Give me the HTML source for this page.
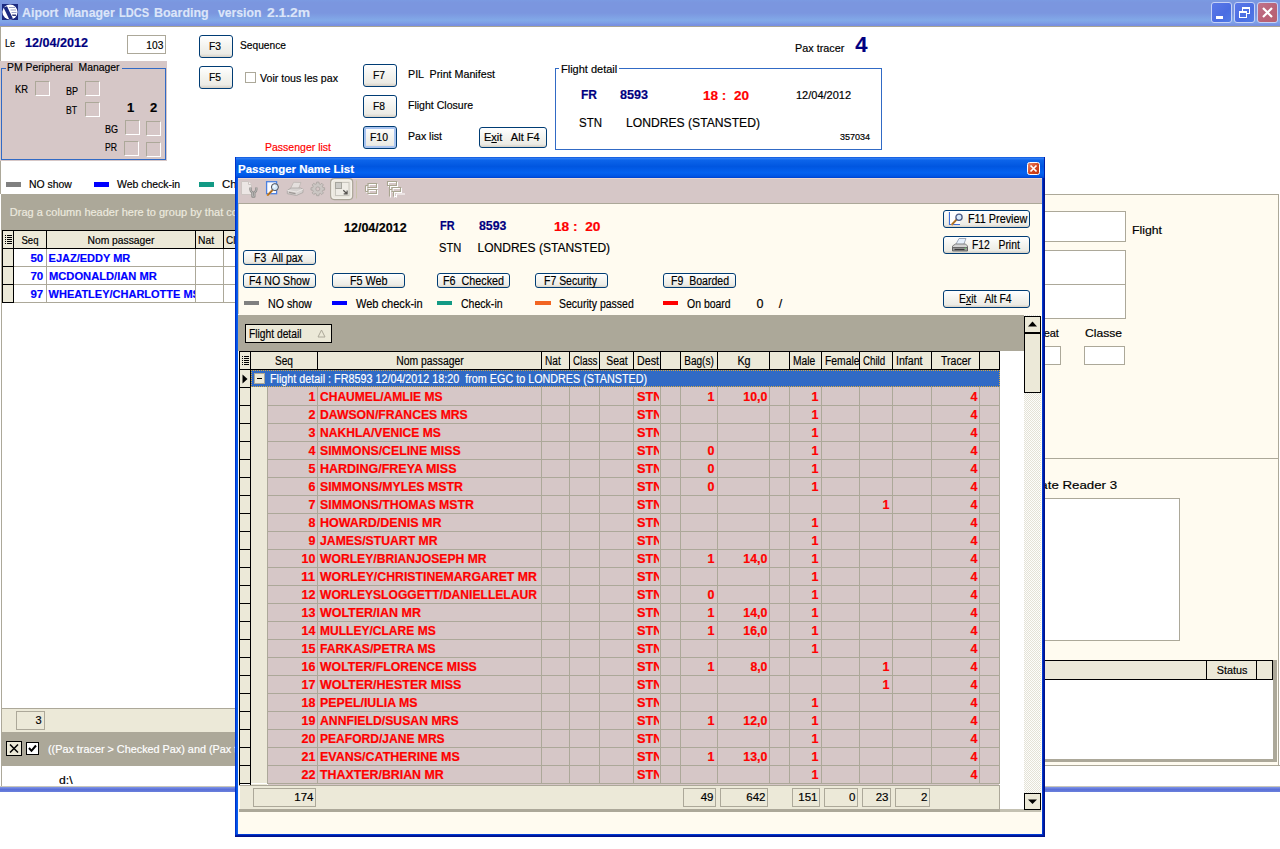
<!DOCTYPE html>
<html><head><meta charset="utf-8"><title>Aiport Manager LDCS Boarding</title>
<style>
html,body{margin:0;padding:0;background:#fff;}
body{width:1280px;height:849px;overflow:hidden;font-family:"Liberation Sans",sans-serif;font-size:11px;color:#000;}
#root{position:relative;width:1280px;height:849px;overflow:hidden;background:#fff;}
#root div,#root span.t,#root svg{position:absolute;box-sizing:border-box;}
.t{white-space:pre;line-height:1;-webkit-text-stroke-width:0.18px;}
.btn{border:1px solid #003c74;border-radius:3px;background:linear-gradient(#fff 0%,#f3f3ee 50%,#ecebe5 85%,#d6d0c5 100%);}
.btn.foc{box-shadow:inset 0 0 0 2px #a9c4f0;}
.inp{border:1px solid #aca899;background:#fff;}
.pk{background:#d6c7c7;}
.chk{border:1px solid #fff;border-top-color:#aca899;border-left-color:#aca899;background:#d6c7c7;}
.hc{background:#ece9d8;border-right:1px solid #000;border-bottom:1px solid #000;}
.fbox{border:1px solid #aca899;background:#ece9d8;}

</style></head>
<body>
<div id="root">
<div style="left:0px;top:0px;width:1280px;height:26px;background:linear-gradient(#7b9ae2 0%,#7b96df 10%,#7b96df 50%,#82a9e8 78%,#7e9fe6 88%,#7890e2 96%,#7890e2 100%);"></div>
<div style="left:0px;top:26px;width:1280px;height:1px;background:#a8a494;"></div>
<svg style="left:2px;top:4px" width="16" height="16" viewBox="0 0 16 16"><rect width="16" height="16" fill="#1b2a80"/><circle cx="8" cy="8" r="7.600" fill="#fff"/><path d="M1.500 3.500L5 2.200L11 14.800L7.200 15.200Z" fill="#1b2a80"/><path d="M7 3.500h6M8.500 6h5.500M9.500 8.500h5" stroke="#9aa3c8" stroke-width="1"/><path d="M10 10.500h4v1.500h-3.500z" fill="#333c7a"/></svg>
<span class="t" style="top:6.17px;font-size:13.5px;left:22.3px;transform:scaleX(0.918);transform-origin:left center;font-weight:bold;color:#dbe5f9;">Aiport</span>
<span class="t" style="top:6.17px;font-size:13.5px;left:64px;transform:scaleX(0.913);transform-origin:left center;font-weight:bold;color:#dbe5f9;">Manager</span>
<span class="t" style="top:6.17px;font-size:13.5px;left:119.4px;transform:scaleX(0.816);transform-origin:left center;font-weight:bold;color:#dbe5f9;">LDCS</span>
<span class="t" style="top:6.17px;font-size:13.5px;left:153.7px;transform:scaleX(0.923);transform-origin:left center;font-weight:bold;color:#dbe5f9;">Boarding</span>
<span class="t" style="top:6.17px;font-size:13.5px;left:217.5px;transform:scaleX(0.904);transform-origin:left center;font-weight:bold;color:#dbe5f9;">version</span>
<span class="t" style="top:6.17px;font-size:13.5px;left:266.9px;transform:scaleX(1.025);transform-origin:left center;font-weight:bold;color:#dbe5f9;">2.1.2m</span>
<div style="left:1211px;top:2px;width:21px;height:21px;border:1px solid #c6d2f6;border-radius:3px;background:linear-gradient(135deg,#5b78e8,#4a6de2 60%,#4f7be6);"><div style="left:4px;top:13px;width:7px;height:3px;background:#fff"></div></div>
<div style="left:1234px;top:2px;width:21px;height:21px;border:1px solid #c6d2f6;border-radius:3px;background:linear-gradient(135deg,#5b78e8,#4a6de2 60%,#4f7be6);"><div style="left:7px;top:4px;width:8px;height:7px;border:1px solid #fff;border-top-width:2px"></div><div style="left:4px;top:8px;width:8px;height:7px;border:1px solid #fff;border-top-width:2px;background:#4d70e3"></div></div>
<div style="left:1257px;top:2px;width:21px;height:21px;border:1px solid #c6d2f6;border-radius:3px;background:linear-gradient(135deg,#c0738a,#b96277 60%,#b8606f);"><svg style="left:3px;top:3px" width="13" height="13" viewBox="0 0 13 13"><path d="M2 2 L11 11 M11 2 L2 11" stroke="#fff" stroke-width="2.2"/></svg></div>
<div style="left:0px;top:27px;width:1px;height:760px;background:#fff;"></div>
<span class="t" style="top:37.69px;font-size:11px;left:5px;transform:scaleX(0.817);transform-origin:left center;">Le</span>
<span class="t" style="top:36.00px;font-size:13px;left:25px;transform:scaleX(0.968);transform-origin:left center;font-weight:bold;color:#000080;">12/04/2012</span>
<div class="inp" style="left:127px;top:35px;width:39px;height:19px;"></div>
<span class="t" style="top:39.69px;font-size:11px;right:1117.00px;transform:scaleX(0.926);transform-origin:right center;">103</span>
<div class="pk" style="left:0px;top:61px;width:167px;height:100px;"></div>
<div style="left:1px;top:68px;width:165px;height:92px;border:1px solid #316ac5;"></div>
<div class="pk" style="left:6px;top:62px;width:116px;height:13px;"></div>
<span class="t" style="top:62.49px;font-size:11px;left:7.4px;transform:scaleX(0.944);transform-origin:left center;">PM Peripheral  Manager</span>
<span class="t" style="top:83.69px;font-size:11px;left:15px;transform:scaleX(0.851);transform-origin:left center;">KR</span>
<div class="chk" style="left:35px;top:81px;width:15px;height:15px;"></div>
<span class="t" style="top:85.69px;font-size:11px;left:66px;transform:scaleX(0.818);transform-origin:left center;">BP</span>
<div class="chk" style="left:85px;top:81px;width:15px;height:15px;"></div>
<span class="t" style="top:104.69px;font-size:11px;left:66px;transform:scaleX(0.783);transform-origin:left center;">BT</span>
<div class="chk" style="left:85px;top:102px;width:15px;height:15px;"></div>
<span class="t" style="top:100.80px;font-size:13px;left:127px;font-weight:bold;">1</span>
<span class="t" style="top:100.80px;font-size:13px;left:150px;font-weight:bold;">2</span>
<span class="t" style="top:123.69px;font-size:11px;left:105px;transform:scaleX(0.818);transform-origin:left center;">BG</span>
<div class="chk" style="left:125px;top:120px;width:15px;height:15px;"></div>
<div class="chk" style="left:146px;top:121px;width:15px;height:15px;"></div>
<span class="t" style="top:141.69px;font-size:11px;left:105px;transform:scaleX(0.785);transform-origin:left center;">PR</span>
<div class="chk" style="left:124px;top:141px;width:15px;height:15px;"></div>
<div class="chk" style="left:146px;top:142px;width:15px;height:15px;"></div>
<div class="btn" style="left:199px;top:35px;width:34px;height:23px;"></div><span class="t" style="top:41.15px;font-size:11px;left:64.80px;width:300px;text-align:center;transform:scaleX(0.935);transform-origin:center center;">F3</span>
<span class="t" style="top:39.69px;font-size:11px;left:240px;transform:scaleX(0.928);transform-origin:left center;">Sequence</span>
<div class="btn" style="left:199px;top:66px;width:34px;height:23px;"></div><span class="t" style="top:72.15px;font-size:11px;left:64.80px;width:300px;text-align:center;transform:scaleX(0.935);transform-origin:center center;">F5</span>
<div style="left:245px;top:72px;width:11px;height:11px;border:1px solid #aca899;background:#fff;"></div>
<span class="t" style="top:72.69px;font-size:11px;left:260px;transform:scaleX(0.966);transform-origin:left center;">Voir tous les pax</span>
<div class="btn" style="left:363px;top:64px;width:34px;height:23px;"></div><span class="t" style="top:70.15px;font-size:11px;left:228.80px;width:300px;text-align:center;transform:scaleX(0.935);transform-origin:center center;">F7</span>
<span class="t" style="top:68.69px;font-size:11px;left:408px;transform:scaleX(0.972);transform-origin:left center;white-space:pre;">PIL  Print Manifest</span>
<div class="btn" style="left:363px;top:95px;width:34px;height:23px;"></div><span class="t" style="top:101.15px;font-size:11px;left:228.80px;width:300px;text-align:center;transform:scaleX(0.935);transform-origin:center center;">F8</span>
<span class="t" style="top:99.69px;font-size:11px;left:408px;transform:scaleX(0.958);transform-origin:left center;">Flight Closure</span>
<div class="btn foc" style="left:363px;top:126px;width:34px;height:23px;"></div><span class="t" style="top:132.15px;font-size:11px;left:228.80px;width:300px;text-align:center;transform:scaleX(0.950);transform-origin:center center;">F10</span>
<span class="t" style="top:130.69px;font-size:11px;left:408px;transform:scaleX(0.959);transform-origin:left center;">Pax list</span>
<div class="btn" style="left:479px;top:127px;width:68px;height:21px;"></div><span class="t" style="top:132.15px;font-size:11px;left:361.80px;width:300px;text-align:center;">E<u>x</u>it   Alt F4</span>
<span class="t" style="top:141.69px;font-size:11px;left:265px;transform:scaleX(0.955);transform-origin:left center;color:#ff0000;">Passenger list</span>
<span class="t" style="top:42.89px;font-size:11px;left:794.6px;transform:scaleX(0.983);transform-origin:left center;">Pax tracer</span>
<span class="t" style="top:34.18px;font-size:22px;left:855.3px;font-weight:bold;color:#000080;">4</span>
<div style="left:555px;top:68px;width:327px;height:82px;border:1px solid #316ac5;"></div>
<div style="left:559px;top:62px;width:60px;height:13px;background:#fff;"></div>
<span class="t" style="top:63.69px;font-size:11px;left:561px;">Flight detail</span>
<span class="t" style="top:88.00px;font-size:13px;left:581px;transform:scaleX(0.923);transform-origin:left center;font-weight:bold;color:#000080;">FR</span>
<span class="t" style="top:88.00px;font-size:13px;left:620px;transform:scaleX(0.968);transform-origin:left center;font-weight:bold;color:#000080;">8593</span>
<span class="t" style="top:89.00px;font-size:13px;left:703px;transform:scaleX(1.043);transform-origin:left center;font-weight:bold;color:#ff0000;white-space:pre;">18 :  20</span>
<span class="t" style="top:89.69px;font-size:11px;left:796px;">12/04/2012</span>
<span class="t" style="top:116.00px;font-size:13px;left:579px;transform:scaleX(0.885);transform-origin:left center;">STN</span>
<span class="t" style="top:116.00px;font-size:13px;left:626px;transform:scaleX(0.934);transform-origin:left center;">LONDRES (STANSTED)</span>
<span class="t" style="top:132.88px;font-size:9px;left:840px;">357034</span>
<div style="left:5.5px;top:182px;width:15px;height:5px;background:#808080;"></div><span class="t" style="top:179.49px;font-size:11px;left:28.5px;transform:scaleX(0.946);transform-origin:left center;">NO show</span>
<div style="left:94px;top:182px;width:15px;height:5px;background:#0000ff;"></div><span class="t" style="top:179.49px;font-size:11px;left:117.2px;transform:scaleX(0.951);transform-origin:left center;">Web check-in</span>
<div style="left:198.5px;top:182px;width:15px;height:5px;background:#139a85;"></div><span class="t" style="top:179.49px;font-size:11px;left:221.6px;transform:scaleX(1.037);transform-origin:left center;">Check-in</span>
<div style="left:1px;top:194px;width:1042px;height:1px;background:#aca899;"></div>
<div style="left:2px;top:194px;width:1040px;height:37px;background:#aca899;"></div>
<span class="t" style="top:207.29px;font-size:11px;left:9.8px;color:#eceadf;">Drag a column header here to group by that column</span>
<div style="left:2px;top:230px;width:300px;height:1px;background:#000;"></div>
<div style="left:2px;top:231px;width:1px;height:72px;background:#000;"></div>
<div class="hc" style="left:3px;top:231px;width:11px;height:18px;"></div>
<svg style="left:5px;top:235px" width="7" height="10" viewBox="0 0 7 10"><path d="M0 0.5h1M2 0.5h5M0 2.5h1M2 2.5h5M0 4.5h1M2 4.5h5M0 6.5h1M2 6.5h5M0 8.5h1M2 8.5h5" stroke="#000" stroke-width="1"/></svg>
<div class="hc" style="left:14px;top:231px;width:33px;height:18px;"></div><span class="t" style="top:234.59px;font-size:11px;left:-120.00px;width:300px;text-align:center;transform:scaleX(0.869);transform-origin:center center;">Seq</span>
<div class="hc" style="left:47px;top:231px;width:149px;height:18px;"></div><span class="t" style="top:234.59px;font-size:11px;left:-29.00px;width:300px;text-align:center;transform:scaleX(0.937);transform-origin:center center;">Nom passager</span>
<div class="hc" style="left:196px;top:231px;width:28px;height:18px;"></div><span class="t" style="top:234.59px;font-size:11px;left:198px;transform:scaleX(0.935);transform-origin:left center;">Nat</span>
<div class="hc" style="left:224px;top:231px;width:30px;height:18px;"></div><span class="t" style="top:234.59px;font-size:11px;left:226px;transform:scaleX(0.909);transform-origin:left center;">Class</span>
<div style="left:3px;top:249px;width:11px;height:18px;background:#ece9d8;border-right:1px solid #000;border-bottom:1px solid #000;"></div>
<div style="left:14px;top:266px;width:240px;height:1px;background:#aca899;"></div>
<span class="t" style="top:252.69px;font-size:11px;right:1237.00px;transform:scaleX(1.046);transform-origin:right center;font-weight:bold;color:#0000ff;">50</span>
<div style="left:48px;top:249px;width:148px;height:17px;overflow:hidden;"><span class="t" style="top:3.69px;font-size:11px;left:0.6px;font-weight:bold;color:#0000ff;">EJAZ/EDDY MR</span></div>
<div style="left:3px;top:267px;width:11px;height:18px;background:#ece9d8;border-right:1px solid #000;border-bottom:1px solid #000;"></div>
<div style="left:14px;top:284px;width:240px;height:1px;background:#aca899;"></div>
<span class="t" style="top:270.69px;font-size:11px;right:1237.00px;transform:scaleX(1.046);transform-origin:right center;font-weight:bold;color:#0000ff;">70</span>
<div style="left:48px;top:267px;width:148px;height:17px;overflow:hidden;"><span class="t" style="top:3.69px;font-size:11px;left:0.6px;transform:scaleX(1.014);transform-origin:left center;font-weight:bold;color:#0000ff;">MCDONALD/IAN MR</span></div>
<div style="left:3px;top:285px;width:11px;height:18px;background:#ece9d8;border-right:1px solid #000;border-bottom:1px solid #000;"></div>
<div style="left:14px;top:302px;width:240px;height:1px;background:#aca899;"></div>
<span class="t" style="top:288.69px;font-size:11px;right:1237.00px;transform:scaleX(1.046);transform-origin:right center;font-weight:bold;color:#0000ff;">97</span>
<div style="left:48px;top:285px;width:148px;height:17px;overflow:hidden;"><span class="t" style="top:3.69px;font-size:11px;left:0.6px;font-weight:bold;color:#0000ff;">WHEATLEY/CHARLOTTE MS</span></div>
<div style="left:46px;top:249px;width:1px;height:54px;background:#aca899;"></div>
<div style="left:195px;top:249px;width:1px;height:54px;background:#aca899;"></div>
<div style="left:223px;top:249px;width:1px;height:54px;background:#aca899;"></div>
<div style="left:2px;top:708px;width:1040px;height:1px;background:#aca899;"></div>
<div style="left:2px;top:709px;width:1040px;height:23px;background:#ece9d8;"></div>
<div class="fbox" style="left:16px;top:711px;width:29px;height:19px;"></div>
<span class="t" style="top:715.49px;font-size:11px;right:1238.50px;">3</span>
<div style="left:2px;top:732px;width:1040px;height:34px;background:#aca899;"></div>
<div style="left:6px;top:741px;width:16px;height:15px;background:#ece9d8;border:1px solid #000;"></div>
<svg style="left:9px;top:744px" width="10" height="9" viewBox="0 0 10 9"><path d="M1 0.500L9 8.500M9 0.500L1 8.500" stroke="#000" stroke-width="1.500"/></svg>
<div style="left:26px;top:742px;width:13px;height:13px;background:#fff;border:1px solid #000;"></div>
<svg style="left:28px;top:744px" width="9" height="9" viewBox="0 0 9 9"><path d="M1 4L3.500 6.800L8 1.500" stroke="#000" stroke-width="2" fill="none"/></svg>
<span class="t" style="top:744.49px;font-size:11px;left:47.8px;transform:scaleX(0.984);transform-origin:left center;color:#fff;">((Pax tracer &gt; Checked Pax) and (Pax tracer = 4))</span>
<span class="t" style="top:774.99px;font-size:11px;left:58.7px;transform:scaleX(1.104);transform-origin:left center;">d:\</span>
<div style="left:1px;top:194px;width:1px;height:592px;background:#aca899;"></div>
<div style="left:0px;top:27px;width:1px;height:34px;background:#aca899;"></div>
<div style="left:0px;top:161px;width:1px;height:33px;background:#aca899;"></div>
<div style="left:1043px;top:194px;width:236px;height:572px;background:#fffbf0;border-top:1px solid #aca899;border-right:1px solid #aca899;"></div>
<div class="inp" style="left:1040px;top:211px;width:86px;height:31px;"></div>
<span class="t" style="top:224.69px;font-size:11px;left:1132px;transform:scaleX(1.115);transform-origin:left center;">Flight</span>
<div class="inp" style="left:1040px;top:250px;width:86px;height:35px;"></div>
<div class="inp" style="left:1040px;top:284px;width:86px;height:35px;"></div>
<span class="t" style="top:327.69px;font-size:11px;left:1036.3px;">Seat</span>
<span class="t" style="top:327.69px;font-size:11px;left:1085px;transform:scaleX(1.100);transform-origin:left center;">Classe</span>
<div class="inp" style="left:1030px;top:346px;width:31px;height:19px;"></div>
<div class="inp" style="left:1084px;top:346px;width:41px;height:19px;"></div>
<div style="left:1043px;top:458px;width:236px;height:1px;background:#aca899;"></div>
<span class="t" style="top:479.69px;font-size:11px;left:1030px;transform:scaleX(1.206);transform-origin:left center;">Gate Reader 3</span>
<div class="inp" style="left:1000px;top:498px;width:180px;height:143px;"></div>
<div style="left:1040px;top:660px;width:237px;height:102px;background:#fff;border-bottom:3px solid #aca899;border-right:4px solid #aca899;"></div>
<div style="left:1040px;top:660px;width:233px;height:1px;background:#000;"></div>
<div class="hc" style="left:1040px;top:661px;width:167px;height:19px;"></div>
<div class="hc" style="left:1207px;top:661px;width:50px;height:19px;"></div><span class="t" style="top:665.09px;font-size:11px;left:1081.50px;width:300px;text-align:center;transform:scaleX(0.984);transform-origin:center center;">Status</span>
<div class="hc" style="left:1257px;top:661px;width:16px;height:19px;"></div>
<div style="left:1043px;top:765px;width:237px;height:1px;background:#aca899;"></div>
<div style="left:1043px;top:766px;width:237px;height:20px;background:#fff;"></div>
<div style="left:0px;top:786px;width:1280px;height:1px;background:#c9c7ba;"></div>
<div style="left:0px;top:787px;width:1280px;height:5px;background:linear-gradient(#7f95e6,#5a70d8 50%,#6a80dc);"></div>
<div style="left:235px;top:157px;width:810px;height:680px;background:#00138c;"></div>
<div style="left:235px;top:157px;width:809px;height:679px;background:linear-gradient(90deg,#0030c8 0,#0030c8 50%,#001aa0 100%);"></div>
<div style="left:235px;top:835px;width:809px;height:1px;background:#001aa0;"></div>
<div style="left:236px;top:157px;width:807px;height:678px;background:linear-gradient(90deg,#0050e4 0,#0050e4 50%,#003ad2 100%);"></div>
<div style="left:236px;top:834px;width:807px;height:1px;background:#003ad2;"></div>
<div style="left:237px;top:157px;width:805px;height:677px;background:#0a5cec;"></div>
<div style="left:235px;top:157px;width:810px;height:21px;background:linear-gradient(#0a52d8 0%,#2f7cf2 6%,#0c64ea 16%,#0056e0 45%,#0562f0 75%,#0055e4 92%,#0040cc 100%);"></div>
<div style="left:235px;top:157px;width:1px;height:21px;background:#0034cc;"></div>
<div style="left:1044px;top:157px;width:1px;height:21px;background:#001ea8;"></div>
<span class="t" style="top:163.89px;font-size:11px;left:238px;transform:scaleX(1.042);transform-origin:left center;font-weight:bold;color:#fff;">Passenger Name List</span>
<div style="left:1027px;top:162px;width:13px;height:13px;border:1px solid #fff;border-radius:2.5px;background:linear-gradient(135deg,#e9876c,#d3461f 55%,#bf3614);"></div>
<svg style="left:1029px;top:164px" width="9" height="9" viewBox="0 0 9 9"><path d="M1.500 1.500L7.500 7.500M7.500 1.500L1.500 7.500" stroke="#fff" stroke-width="1.700"/></svg>
<div style="left:238px;top:178px;width:804px;height:656px;background:#fffbf0;"></div>
<div class="pk" style="left:238px;top:178px;width:804px;height:25px;"></div>
<div style="left:238px;top:203px;width:804px;height:1px;background:#aca899;"></div>
<div style="left:238px;top:178px;width:804px;height:1px;background:#ecd8d2;"></div>
<div style="left:238px;top:204px;width:1px;height:110px;background:#c9c5b8;"></div>
<svg style="left:238px;top:178px" width="180" height="25" viewBox="0 0 180 25">
<g fill="none" stroke-width="1">
<path d="M3.500 3.500h7l3 3v10h-10z" fill="#ece6e4" stroke="#cdc5c2"/><path d="M10.500 3.500v3h3" stroke="#cdc5c2" fill="#f6f2f0"/>
<path d="M12.500 9.500v2.300q0 1.800 2 2.500v4.200h1.800v-4.200q2-0.700 2-2.500v-2.300" stroke="#8f8d8b" stroke-width="2.400" stroke-linejoin="round"/>
<path d="M12.500 9.800v2q0 1.800 2 2.500v4h1.800v-4q2-0.700 2-2.500v-2" stroke="#c9c7c5" stroke-width="0.700"/>
<rect x="28.600" y="3.700" width="10" height="12" fill="#fbfcff" stroke="#4a80e0" stroke-width="1.300"/>
<path d="M34.300 12.300L29.800 16.900" stroke="#c8842e" stroke-width="2.200" stroke-linecap="round"/><path d="M34 12.900L30.300 16.700" stroke="#7a4a12" stroke-width="0.600"/>
<circle cx="36.900" cy="9.100" r="3.500" fill="#d4e8f8" stroke="#4a4c55" stroke-width="1"/><circle cx="36.300" cy="8.400" r="1.300" fill="#f4faff"/>
<path d="M52.400 10.700L55.600 4.300L63 4.500L60.500 10.900Z" fill="#e4dfdd" stroke="#bcb6b3" stroke-width="0.800"/>
<path d="M49.300 12.300L53 10h9.500L65 11.200V14.500L58.500 17.500L49.300 15.700Z" fill="#d6d2d0" stroke="#aaa5a2" stroke-width="0.800"/>
<path d="M49.300 12.300L58.500 14L65 11.200" stroke="#f0ecea" stroke-width="0.800"/>
<path d="M51 14.300L57.500 15.600" stroke="#9c9794" stroke-width="1.300"/>
<path d="M86.60 9.71L86.60 12.09L84.95 12.14L84.32 13.67L85.45 14.87L83.77 16.55L82.57 15.42L81.04 16.05L80.99 17.70L78.61 17.70L78.56 16.05L77.03 15.42L75.83 16.55L74.15 14.87L75.28 13.67L74.65 12.14L73.00 12.09L73.00 9.71L74.65 9.66L75.28 8.13L74.15 6.93L75.83 5.25L77.03 6.38L78.56 5.75L78.61 4.10L80.99 4.10L81.04 5.75L82.57 6.38L83.77 5.25L85.45 6.93L84.32 8.13L84.95 9.66Z" fill="#cbc6c3" stroke="#aba6a3" stroke-width="0.900"/><circle cx="79.800" cy="10.900" r="2" fill="#d6c7c7" stroke="#aba6a3" stroke-width="0.900"/>
<rect x="92.700" y="0.600" width="22" height="21" rx="3.500" fill="#ebe8df" stroke="#aaa598" stroke-width="1.200"/><rect x="94" y="2" width="19.400" height="18.200" rx="2.500" stroke="#f6f4ee" stroke-width="1"/>
<rect x="97.500" y="4.500" width="13.500" height="13" fill="#efede6" stroke="#c9c7bf"/><rect x="97.500" y="4.500" width="6" height="6" fill="#cbcbc6" stroke="#a6a69e"/>
<path d="M105.300 12.300l3.600 3.400m0.200-3.200v3.400h-3.400" stroke="#55534f" stroke-width="1.200"/>
<path d="M118.500 2.500v18" stroke="#c9c3aa"/>
<g transform="translate(1,1)"><path d="M130 5.500h8.500v4h-8.500zM130 11.500h8.500v4h-8.500zM127.500 7.500h2.500M127.500 13.500h2.500M127.500 7.500v6" stroke="#ffffff" stroke-width="1.100"/><path d="M149.500 3.500h9v4h-9zM154 9.500h8.500v4h-8.500zM151.500 7.500v11M151.500 11.500h2.500M155.500 13.500v5M157.500 15h8.500M157.500 15v3.500M155.500 17.500h2" stroke="#ffffff" stroke-width="1.100"/></g>
<path d="M130 5.500h8.500v4h-8.500zM130 11.500h8.500v4h-8.500zM127.500 7.500h2.500M127.500 13.500h2.500M127.500 7.500v6" stroke="#a9a591" stroke-width="1.100"/><path d="M149.500 3.500h9v4h-9zM154 9.500h8.500v4h-8.500zM151.500 7.500v11M151.500 11.500h2.500M155.500 13.500v5" stroke="#a9a591" stroke-width="1.100"/>
</g></svg>
<span class="t" style="top:220.50px;font-size:13px;left:343.5px;transform:scaleX(0.962);transform-origin:left center;font-weight:bold;color:#000;">12/04/2012</span>
<span class="t" style="top:219.54px;font-size:12px;left:439.7px;transform:scaleX(0.906);transform-origin:left center;font-weight:bold;color:#000080;">FR</span>
<span class="t" style="top:219.54px;font-size:12px;left:478.8px;transform:scaleX(1.026);transform-origin:left center;font-weight:bold;color:#000080;">8593</span>
<span class="t" style="top:221.04px;font-size:12px;left:554px;transform:scaleX(1.140);transform-origin:left center;font-weight:bold;color:#ff0000;">18 :  20</span>
<span class="t" style="top:241.84px;font-size:12px;left:439px;transform:scaleX(0.925);transform-origin:left center;">STN</span>
<span class="t" style="top:241.84px;font-size:12px;left:477.6px;">LONDRES (STANSTED)</span>
<div class="btn" style="left:243px;top:250px;width:73px;height:15px;border-radius:3px;"></div><span class="t" style="top:252.22px;font-size:12.5px;left:254.4px;transform:scaleX(0.836);transform-origin:left center;">F3  All pax</span>
<div class="btn" style="left:243px;top:273px;width:73px;height:15px;border-radius:3px;"></div><span class="t" style="top:275.22px;font-size:12.5px;left:248.5px;transform:scaleX(0.847);transform-origin:left center;">F4 NO Show</span>
<div class="btn" style="left:332px;top:273px;width:73px;height:15px;border-radius:3px;"></div><span class="t" style="top:275.22px;font-size:12.5px;left:349.6px;transform:scaleX(0.864);transform-origin:left center;">F5 Web</span>
<div class="btn" style="left:437px;top:273px;width:73px;height:15px;border-radius:3px;"></div><span class="t" style="top:275.22px;font-size:12.5px;left:442.5px;transform:scaleX(0.861);transform-origin:left center;">F6  Checked</span>
<div class="btn" style="left:535px;top:273px;width:73px;height:15px;border-radius:3px;"></div><span class="t" style="top:275.22px;font-size:12.5px;left:544.3px;transform:scaleX(0.838);transform-origin:left center;">F7 Security</span>
<div class="btn" style="left:663px;top:273px;width:73px;height:15px;border-radius:3px;"></div><span class="t" style="top:275.22px;font-size:12.5px;left:670.5px;transform:scaleX(0.843);transform-origin:left center;">F9  Boarded</span>
<div class="btn" style="left:943px;top:210px;width:87px;height:18px;border-radius:3px;"></div><span class="t" style="top:212.62px;font-size:12.5px;left:967.5px;transform:scaleX(0.865);transform-origin:left center;">F11 Preview</span>
<div class="btn" style="left:943px;top:236px;width:87px;height:18px;border-radius:3px;"></div><span class="t" style="top:238.82px;font-size:12.5px;left:972.4px;transform:scaleX(0.829);transform-origin:left center;">F12   Print</span>
<div class="btn" style="left:943px;top:290px;width:87px;height:18px;border-radius:3px;"></div><span class="t" style="top:292.52px;font-size:12.5px;left:959.4px;transform:scaleX(0.832);transform-origin:left center;">E<u>x</u>it   Alt F4</span>
<svg style="left:947px;top:211px" width="18" height="16" viewBox="0 0 18 16"><path d="M2.500 1v12.500h10.500" fill="none" stroke="#3f6fd8" stroke-width="1.200"/><rect x="3" y="1" width="10" height="12" fill="#fdfdff"/><path d="M10 8L4.500 14" stroke="#c98632" stroke-width="2"/><path d="M9.700 8.600L5.500 13" stroke="#6a4210" stroke-width="0.600"/><circle cx="12" cy="6.200" r="3.100" fill="#d9e9fb" stroke="#4a5a86" stroke-width="1.300"/></svg>
<svg style="left:951px;top:237px" width="18" height="16" viewBox="0 0 18 16"><path d="M4.500 8l3.500-6.500h7l-2.500 6.500z" fill="#e6f0fc" stroke="#8d97a8" stroke-width="0.800"/><path d="M1.500 9l3-2h10l2 2v4h-15z" fill="#d4d4d4" stroke="#777" stroke-width="0.900"/><path d="M1.500 10.500h15v3.500h-15z" fill="#9a9a9a" stroke="#555" stroke-width="0.800"/><path d="M3.500 12.500h10" stroke="#3a3a3a" stroke-width="1.200"/><circle cx="14.300" cy="11.300" r="0.700" fill="#6c6"/></svg>
<div style="left:244px;top:301px;width:15px;height:4px;background:#808080;"></div><span class="t" style="top:297.52px;font-size:12.5px;left:267.5px;transform:scaleX(0.852);transform-origin:left center;">NO show</span>
<div style="left:332px;top:301px;width:15px;height:4px;background:#0000ff;"></div><span class="t" style="top:297.52px;font-size:12.5px;left:355.5px;transform:scaleX(0.883);transform-origin:left center;">Web check-in</span>
<div style="left:437px;top:301px;width:15px;height:4px;background:#139a85;"></div><span class="t" style="top:297.52px;font-size:12.5px;left:460.7px;transform:scaleX(0.843);transform-origin:left center;">Check-in</span>
<div style="left:534.5px;top:301px;width:16px;height:4px;background:#f26522;"></div><span class="t" style="top:297.52px;font-size:12.5px;left:558.5px;transform:scaleX(0.841);transform-origin:left center;">Security passed</span>
<div style="left:662.5px;top:301px;width:15px;height:4px;background:#ff0000;"></div><span class="t" style="top:297.52px;font-size:12.5px;left:686.5px;transform:scaleX(0.838);transform-origin:left center;">On board</span>
<span class="t" style="top:297.52px;font-size:12.5px;left:756.5px;">0</span>
<span class="t" style="top:297.52px;font-size:12.5px;left:778.8px;">/</span>
<div style="left:238px;top:315px;width:786px;height:36px;background:#aca899;"></div>
<div style="left:245px;top:324px;width:87px;height:19px;background:#ece9d8;border:1px solid #000;"></div>
<span class="t" style="top:327.92px;font-size:12.5px;left:248.5px;transform:scaleX(0.821);transform-origin:left center;">Flight detail</span>
<svg style="left:317px;top:329px" width="9" height="9" viewBox="0 0 9 9"><path d="M4.500 1L8 8H1z" fill="none" stroke="#aca899"/></svg>
<div style="left:239px;top:351px;width:785px;height:458px;background:#fff;"></div>
<div style="left:239px;top:351px;width:761px;height:1px;background:#000;"></div>
<div style="left:239px;top:352px;width:1px;height:434px;background:#000;"></div>
<div class="hc" style="left:240px;top:352px;width:11px;height:18px;overflow:hidden;"></div>
<div class="hc" style="left:251px;top:352px;width:67px;height:18px;overflow:hidden;"></div>
<span class="t" style="top:355.42px;font-size:12.5px;left:134.00px;width:300px;text-align:center;transform:scaleX(0.809);transform-origin:center center;">Seq</span>
<div class="hc" style="left:318px;top:352px;width:224px;height:18px;overflow:hidden;"></div>
<span class="t" style="top:355.42px;font-size:12.5px;left:279.50px;width:300px;text-align:center;transform:scaleX(0.830);transform-origin:center center;">Nom passager</span>
<div class="hc" style="left:542px;top:352px;width:28px;height:18px;overflow:hidden;"></div>
<div style="left:542px;top:352px;width:27px;height:17px;overflow:hidden;"><span class="t" style="top:3.42px;font-size:12.5px;left:3px;transform:scaleX(0.807);transform-origin:left center;">Nat</span></div>
<div class="hc" style="left:570px;top:352px;width:30px;height:18px;overflow:hidden;"></div>
<div style="left:570px;top:352px;width:29px;height:17px;overflow:hidden;"><span class="t" style="top:3.42px;font-size:12.5px;left:3px;transform:scaleX(0.781);transform-origin:left center;">Class</span></div>
<div class="hc" style="left:600px;top:352px;width:34px;height:18px;overflow:hidden;"></div>
<span class="t" style="top:355.42px;font-size:12.5px;left:466.50px;width:300px;text-align:center;transform:scaleX(0.836);transform-origin:center center;">Seat</span>
<div class="hc" style="left:634px;top:352px;width:27px;height:18px;overflow:hidden;"></div>
<div style="left:634px;top:352px;width:26px;height:17px;overflow:hidden;"><span class="t" style="top:3.42px;font-size:12.5px;left:3px;transform:scaleX(0.856);transform-origin:left center;">Dest</span></div>
<div class="hc" style="left:661px;top:352px;width:20px;height:18px;overflow:hidden;"></div>
<div class="hc" style="left:681px;top:352px;width:37px;height:18px;overflow:hidden;"></div>
<span class="t" style="top:355.42px;font-size:12.5px;left:549.00px;width:300px;text-align:center;transform:scaleX(0.804);transform-origin:center center;">Bag(s)</span>
<div class="hc" style="left:718px;top:352px;width:52px;height:18px;overflow:hidden;"></div>
<span class="t" style="top:355.42px;font-size:12.5px;left:593.50px;width:300px;text-align:center;transform:scaleX(0.863);transform-origin:center center;">Kg</span>
<div class="hc" style="left:770px;top:352px;width:20px;height:18px;overflow:hidden;"></div>
<div class="hc" style="left:790px;top:352px;width:32px;height:18px;overflow:hidden;"></div>
<div style="left:790px;top:352px;width:31px;height:17px;overflow:hidden;"><span class="t" style="top:3.42px;font-size:12.5px;left:3px;transform:scaleX(0.819);transform-origin:left center;">Male</span></div>
<div class="hc" style="left:822px;top:352px;width:38px;height:18px;overflow:hidden;"></div>
<div style="left:822px;top:352px;width:37px;height:17px;overflow:hidden;"><span class="t" style="top:3.42px;font-size:12.5px;left:3px;transform:scaleX(0.828);transform-origin:left center;">Female</span></div>
<div class="hc" style="left:860px;top:352px;width:33px;height:18px;overflow:hidden;"></div>
<div style="left:860px;top:352px;width:32px;height:17px;overflow:hidden;"><span class="t" style="top:3.42px;font-size:12.5px;left:3px;transform:scaleX(0.779);transform-origin:left center;">Child</span></div>
<div class="hc" style="left:893px;top:352px;width:39px;height:18px;overflow:hidden;"></div>
<div style="left:893px;top:352px;width:38px;height:17px;overflow:hidden;"><span class="t" style="top:3.42px;font-size:12.5px;left:3px;transform:scaleX(0.847);transform-origin:left center;">Infant</span></div>
<div class="hc" style="left:932px;top:352px;width:48px;height:18px;overflow:hidden;"></div>
<span class="t" style="top:355.42px;font-size:12.5px;left:805.50px;width:300px;text-align:center;transform:scaleX(0.841);transform-origin:center center;">Tracer</span>
<div class="hc" style="left:980px;top:352px;width:20px;height:18px;overflow:hidden;"></div>
<svg style="left:242px;top:356px" width="7" height="10" viewBox="0 0 7 10"><path d="M0 0.5h1M2 0.5h5M0 2.500h1M2 2.500h5M0 4.500h1M2 4.500h5M0 6.500h1M2 6.500h5M0 8.500h1M2 8.500h5" stroke="#000" stroke-width="1"/></svg>
<div style="left:240px;top:370px;width:11px;height:17px;background:#ece9d8;"></div>
<div style="left:240px;top:387px;width:11px;height:1px;background:#000;"></div>
<div style="left:250px;top:370px;width:1px;height:416px;background:#000;"></div>
<svg style="left:242px;top:374px" width="6" height="10" viewBox="0 0 6 10"><path d="M0.500 0.500L5.500 5L0.500 9.500z" fill="#000"/></svg>
<div style="left:251px;top:370px;width:749px;height:17px;background:#316ac5;border:1px dotted #d8a840;"></div>
<div style="left:254px;top:373px;width:11px;height:11px;background:#ece9d8;border:1px solid #aca899;"></div>
<div style="left:257px;top:378px;width:5px;height:1px;background:#000;"></div>
<span class="t" style="top:373.12px;font-size:12.5px;left:270px;transform:scaleX(0.862);transform-origin:left center;color:#fff;">Flight detail : FR8593 12/04/2012 18:20  from EGC to LONDRES (STANSTED)</span>
<div style="left:240px;top:388px;width:10px;height:17px;background:#ece9d8;"></div>
<div style="left:240px;top:405px;width:11px;height:1px;background:#000;"></div>
<div style="left:251px;top:387px;width:16px;height:18px;background:#ece9d8;"></div>
<div class="pk" style="left:268px;top:388px;width:731px;height:17px;"></div>
<div style="left:267px;top:405px;width:733px;height:1px;background:#aca899;"></div>
<span class="t" style="top:390.92px;font-size:12.5px;right:964.60px;font-weight:bold;color:#ff0000;-webkit-text-stroke:0.22px #ff0000;">1</span>
<span class="t" style="top:390.92px;font-size:12.5px;left:319.9px;transform:scaleX(0.964);transform-origin:left center;font-weight:bold;color:#ff0000;-webkit-text-stroke:0.22px #ff0000;">CHAUMEL/AMLIE MS</span>
<div style="left:634px;top:388px;width:24.5px;height:17px;overflow:hidden;"><span class="t" style="top:2.92px;font-size:12.5px;left:2.5px;transform:scaleX(1.020);transform-origin:left center;font-weight:bold;color:#ff0000;-webkit-text-stroke:0.22px #ff0000;">STN</span></div>
<span class="t" style="top:390.92px;font-size:12.5px;right:565.50px;font-weight:bold;color:#ff0000;-webkit-text-stroke:0.22px #ff0000;">1</span>
<span class="t" style="top:390.92px;font-size:12.5px;right:512.50px;transform:scaleX(0.986);transform-origin:right center;font-weight:bold;color:#ff0000;-webkit-text-stroke:0.22px #ff0000;">10,0</span>
<span class="t" style="top:390.92px;font-size:12.5px;right:461.50px;font-weight:bold;color:#ff0000;-webkit-text-stroke:0.22px #ff0000;">1</span>
<span class="t" style="top:390.92px;font-size:12.5px;right:302.50px;font-weight:bold;color:#ff0000;-webkit-text-stroke:0.22px #ff0000;">4</span>
<div style="left:240px;top:406px;width:10px;height:17px;background:#ece9d8;"></div>
<div style="left:240px;top:423px;width:11px;height:1px;background:#000;"></div>
<div style="left:251px;top:405px;width:16px;height:18px;background:#ece9d8;"></div>
<div class="pk" style="left:268px;top:406px;width:731px;height:17px;"></div>
<div style="left:267px;top:423px;width:733px;height:1px;background:#aca899;"></div>
<span class="t" style="top:408.92px;font-size:12.5px;right:964.60px;font-weight:bold;color:#ff0000;-webkit-text-stroke:0.22px #ff0000;">2</span>
<span class="t" style="top:408.92px;font-size:12.5px;left:319.9px;transform:scaleX(0.976);transform-origin:left center;font-weight:bold;color:#ff0000;-webkit-text-stroke:0.22px #ff0000;">DAWSON/FRANCES MRS</span>
<div style="left:634px;top:406px;width:24.5px;height:17px;overflow:hidden;"><span class="t" style="top:2.92px;font-size:12.5px;left:2.5px;transform:scaleX(1.020);transform-origin:left center;font-weight:bold;color:#ff0000;-webkit-text-stroke:0.22px #ff0000;">STN</span></div>
<span class="t" style="top:408.92px;font-size:12.5px;right:461.50px;font-weight:bold;color:#ff0000;-webkit-text-stroke:0.22px #ff0000;">1</span>
<span class="t" style="top:408.92px;font-size:12.5px;right:302.50px;font-weight:bold;color:#ff0000;-webkit-text-stroke:0.22px #ff0000;">4</span>
<div style="left:240px;top:424px;width:10px;height:17px;background:#ece9d8;"></div>
<div style="left:240px;top:441px;width:11px;height:1px;background:#000;"></div>
<div style="left:251px;top:423px;width:16px;height:18px;background:#ece9d8;"></div>
<div class="pk" style="left:268px;top:424px;width:731px;height:17px;"></div>
<div style="left:267px;top:441px;width:733px;height:1px;background:#aca899;"></div>
<span class="t" style="top:426.92px;font-size:12.5px;right:964.60px;font-weight:bold;color:#ff0000;-webkit-text-stroke:0.22px #ff0000;">3</span>
<span class="t" style="top:426.92px;font-size:12.5px;left:319.9px;transform:scaleX(0.966);transform-origin:left center;font-weight:bold;color:#ff0000;-webkit-text-stroke:0.22px #ff0000;">NAKHLA/VENICE MS</span>
<div style="left:634px;top:424px;width:24.5px;height:17px;overflow:hidden;"><span class="t" style="top:2.92px;font-size:12.5px;left:2.5px;transform:scaleX(1.020);transform-origin:left center;font-weight:bold;color:#ff0000;-webkit-text-stroke:0.22px #ff0000;">STN</span></div>
<span class="t" style="top:426.92px;font-size:12.5px;right:461.50px;font-weight:bold;color:#ff0000;-webkit-text-stroke:0.22px #ff0000;">1</span>
<span class="t" style="top:426.92px;font-size:12.5px;right:302.50px;font-weight:bold;color:#ff0000;-webkit-text-stroke:0.22px #ff0000;">4</span>
<div style="left:240px;top:442px;width:10px;height:17px;background:#ece9d8;"></div>
<div style="left:240px;top:459px;width:11px;height:1px;background:#000;"></div>
<div style="left:251px;top:441px;width:16px;height:18px;background:#ece9d8;"></div>
<div class="pk" style="left:268px;top:442px;width:731px;height:17px;"></div>
<div style="left:267px;top:459px;width:733px;height:1px;background:#aca899;"></div>
<span class="t" style="top:444.92px;font-size:12.5px;right:964.60px;font-weight:bold;color:#ff0000;-webkit-text-stroke:0.22px #ff0000;">4</span>
<span class="t" style="top:444.92px;font-size:12.5px;left:319.9px;transform:scaleX(0.983);transform-origin:left center;font-weight:bold;color:#ff0000;-webkit-text-stroke:0.22px #ff0000;">SIMMONS/CELINE MISS</span>
<div style="left:634px;top:442px;width:24.5px;height:17px;overflow:hidden;"><span class="t" style="top:2.92px;font-size:12.5px;left:2.5px;transform:scaleX(1.020);transform-origin:left center;font-weight:bold;color:#ff0000;-webkit-text-stroke:0.22px #ff0000;">STN</span></div>
<span class="t" style="top:444.92px;font-size:12.5px;right:565.50px;font-weight:bold;color:#ff0000;-webkit-text-stroke:0.22px #ff0000;">0</span>
<span class="t" style="top:444.92px;font-size:12.5px;right:461.50px;font-weight:bold;color:#ff0000;-webkit-text-stroke:0.22px #ff0000;">1</span>
<span class="t" style="top:444.92px;font-size:12.5px;right:302.50px;font-weight:bold;color:#ff0000;-webkit-text-stroke:0.22px #ff0000;">4</span>
<div style="left:240px;top:460px;width:10px;height:17px;background:#ece9d8;"></div>
<div style="left:240px;top:477px;width:11px;height:1px;background:#000;"></div>
<div style="left:251px;top:459px;width:16px;height:18px;background:#ece9d8;"></div>
<div class="pk" style="left:268px;top:460px;width:731px;height:17px;"></div>
<div style="left:267px;top:477px;width:733px;height:1px;background:#aca899;"></div>
<span class="t" style="top:462.92px;font-size:12.5px;right:964.60px;font-weight:bold;color:#ff0000;-webkit-text-stroke:0.22px #ff0000;">5</span>
<span class="t" style="top:462.92px;font-size:12.5px;left:319.9px;font-weight:bold;color:#ff0000;-webkit-text-stroke:0.22px #ff0000;">HARDING/FREYA MISS</span>
<div style="left:634px;top:460px;width:24.5px;height:17px;overflow:hidden;"><span class="t" style="top:2.92px;font-size:12.5px;left:2.5px;transform:scaleX(1.020);transform-origin:left center;font-weight:bold;color:#ff0000;-webkit-text-stroke:0.22px #ff0000;">STN</span></div>
<span class="t" style="top:462.92px;font-size:12.5px;right:565.50px;font-weight:bold;color:#ff0000;-webkit-text-stroke:0.22px #ff0000;">0</span>
<span class="t" style="top:462.92px;font-size:12.5px;right:461.50px;font-weight:bold;color:#ff0000;-webkit-text-stroke:0.22px #ff0000;">1</span>
<span class="t" style="top:462.92px;font-size:12.5px;right:302.50px;font-weight:bold;color:#ff0000;-webkit-text-stroke:0.22px #ff0000;">4</span>
<div style="left:240px;top:478px;width:10px;height:17px;background:#ece9d8;"></div>
<div style="left:240px;top:495px;width:11px;height:1px;background:#000;"></div>
<div style="left:251px;top:477px;width:16px;height:18px;background:#ece9d8;"></div>
<div class="pk" style="left:268px;top:478px;width:731px;height:17px;"></div>
<div style="left:267px;top:495px;width:733px;height:1px;background:#aca899;"></div>
<span class="t" style="top:480.92px;font-size:12.5px;right:964.60px;font-weight:bold;color:#ff0000;-webkit-text-stroke:0.22px #ff0000;">6</span>
<span class="t" style="top:480.92px;font-size:12.5px;left:319.9px;transform:scaleX(0.984);transform-origin:left center;font-weight:bold;color:#ff0000;-webkit-text-stroke:0.22px #ff0000;">SIMMONS/MYLES MSTR</span>
<div style="left:634px;top:478px;width:24.5px;height:17px;overflow:hidden;"><span class="t" style="top:2.92px;font-size:12.5px;left:2.5px;transform:scaleX(1.020);transform-origin:left center;font-weight:bold;color:#ff0000;-webkit-text-stroke:0.22px #ff0000;">STN</span></div>
<span class="t" style="top:480.92px;font-size:12.5px;right:565.50px;font-weight:bold;color:#ff0000;-webkit-text-stroke:0.22px #ff0000;">0</span>
<span class="t" style="top:480.92px;font-size:12.5px;right:461.50px;font-weight:bold;color:#ff0000;-webkit-text-stroke:0.22px #ff0000;">1</span>
<span class="t" style="top:480.92px;font-size:12.5px;right:302.50px;font-weight:bold;color:#ff0000;-webkit-text-stroke:0.22px #ff0000;">4</span>
<div style="left:240px;top:496px;width:10px;height:17px;background:#ece9d8;"></div>
<div style="left:240px;top:513px;width:11px;height:1px;background:#000;"></div>
<div style="left:251px;top:495px;width:16px;height:18px;background:#ece9d8;"></div>
<div class="pk" style="left:268px;top:496px;width:731px;height:17px;"></div>
<div style="left:267px;top:513px;width:733px;height:1px;background:#aca899;"></div>
<span class="t" style="top:498.92px;font-size:12.5px;right:964.60px;font-weight:bold;color:#ff0000;-webkit-text-stroke:0.22px #ff0000;">7</span>
<span class="t" style="top:498.92px;font-size:12.5px;left:319.9px;transform:scaleX(0.985);transform-origin:left center;font-weight:bold;color:#ff0000;-webkit-text-stroke:0.22px #ff0000;">SIMMONS/THOMAS MSTR</span>
<div style="left:634px;top:496px;width:24.5px;height:17px;overflow:hidden;"><span class="t" style="top:2.92px;font-size:12.5px;left:2.5px;transform:scaleX(1.020);transform-origin:left center;font-weight:bold;color:#ff0000;-webkit-text-stroke:0.22px #ff0000;">STN</span></div>
<span class="t" style="top:498.92px;font-size:12.5px;right:390.50px;font-weight:bold;color:#ff0000;-webkit-text-stroke:0.22px #ff0000;">1</span>
<span class="t" style="top:498.92px;font-size:12.5px;right:302.50px;font-weight:bold;color:#ff0000;-webkit-text-stroke:0.22px #ff0000;">4</span>
<div style="left:240px;top:514px;width:10px;height:17px;background:#ece9d8;"></div>
<div style="left:240px;top:531px;width:11px;height:1px;background:#000;"></div>
<div style="left:251px;top:513px;width:16px;height:18px;background:#ece9d8;"></div>
<div class="pk" style="left:268px;top:514px;width:731px;height:17px;"></div>
<div style="left:267px;top:531px;width:733px;height:1px;background:#aca899;"></div>
<span class="t" style="top:516.92px;font-size:12.5px;right:964.60px;font-weight:bold;color:#ff0000;-webkit-text-stroke:0.22px #ff0000;">8</span>
<span class="t" style="top:516.92px;font-size:12.5px;left:319.9px;font-weight:bold;color:#ff0000;-webkit-text-stroke:0.22px #ff0000;">HOWARD/DENIS MR</span>
<div style="left:634px;top:514px;width:24.5px;height:17px;overflow:hidden;"><span class="t" style="top:2.92px;font-size:12.5px;left:2.5px;transform:scaleX(1.020);transform-origin:left center;font-weight:bold;color:#ff0000;-webkit-text-stroke:0.22px #ff0000;">STN</span></div>
<span class="t" style="top:516.92px;font-size:12.5px;right:461.50px;font-weight:bold;color:#ff0000;-webkit-text-stroke:0.22px #ff0000;">1</span>
<span class="t" style="top:516.92px;font-size:12.5px;right:302.50px;font-weight:bold;color:#ff0000;-webkit-text-stroke:0.22px #ff0000;">4</span>
<div style="left:240px;top:532px;width:10px;height:17px;background:#ece9d8;"></div>
<div style="left:240px;top:549px;width:11px;height:1px;background:#000;"></div>
<div style="left:251px;top:531px;width:16px;height:18px;background:#ece9d8;"></div>
<div class="pk" style="left:268px;top:532px;width:731px;height:17px;"></div>
<div style="left:267px;top:549px;width:733px;height:1px;background:#aca899;"></div>
<span class="t" style="top:534.92px;font-size:12.5px;right:964.60px;font-weight:bold;color:#ff0000;-webkit-text-stroke:0.22px #ff0000;">9</span>
<span class="t" style="top:534.92px;font-size:12.5px;left:319.9px;transform:scaleX(0.979);transform-origin:left center;font-weight:bold;color:#ff0000;-webkit-text-stroke:0.22px #ff0000;">JAMES/STUART MR</span>
<div style="left:634px;top:532px;width:24.5px;height:17px;overflow:hidden;"><span class="t" style="top:2.92px;font-size:12.5px;left:2.5px;transform:scaleX(1.020);transform-origin:left center;font-weight:bold;color:#ff0000;-webkit-text-stroke:0.22px #ff0000;">STN</span></div>
<span class="t" style="top:534.92px;font-size:12.5px;right:461.50px;font-weight:bold;color:#ff0000;-webkit-text-stroke:0.22px #ff0000;">1</span>
<span class="t" style="top:534.92px;font-size:12.5px;right:302.50px;font-weight:bold;color:#ff0000;-webkit-text-stroke:0.22px #ff0000;">4</span>
<div style="left:240px;top:550px;width:10px;height:17px;background:#ece9d8;"></div>
<div style="left:240px;top:567px;width:11px;height:1px;background:#000;"></div>
<div style="left:251px;top:549px;width:16px;height:18px;background:#ece9d8;"></div>
<div class="pk" style="left:268px;top:550px;width:731px;height:17px;"></div>
<div style="left:267px;top:567px;width:733px;height:1px;background:#aca899;"></div>
<span class="t" style="top:552.92px;font-size:12.5px;right:964.60px;font-weight:bold;color:#ff0000;-webkit-text-stroke:0.22px #ff0000;">10</span>
<span class="t" style="top:552.92px;font-size:12.5px;left:319.9px;transform:scaleX(0.971);transform-origin:left center;font-weight:bold;color:#ff0000;-webkit-text-stroke:0.22px #ff0000;">WORLEY/BRIANJOSEPH MR</span>
<div style="left:634px;top:550px;width:24.5px;height:17px;overflow:hidden;"><span class="t" style="top:2.92px;font-size:12.5px;left:2.5px;transform:scaleX(1.020);transform-origin:left center;font-weight:bold;color:#ff0000;-webkit-text-stroke:0.22px #ff0000;">STN</span></div>
<span class="t" style="top:552.92px;font-size:12.5px;right:565.50px;font-weight:bold;color:#ff0000;-webkit-text-stroke:0.22px #ff0000;">1</span>
<span class="t" style="top:552.92px;font-size:12.5px;right:512.50px;transform:scaleX(0.986);transform-origin:right center;font-weight:bold;color:#ff0000;-webkit-text-stroke:0.22px #ff0000;">14,0</span>
<span class="t" style="top:552.92px;font-size:12.5px;right:461.50px;font-weight:bold;color:#ff0000;-webkit-text-stroke:0.22px #ff0000;">1</span>
<span class="t" style="top:552.92px;font-size:12.5px;right:302.50px;font-weight:bold;color:#ff0000;-webkit-text-stroke:0.22px #ff0000;">4</span>
<div style="left:240px;top:568px;width:10px;height:17px;background:#ece9d8;"></div>
<div style="left:240px;top:585px;width:11px;height:1px;background:#000;"></div>
<div style="left:251px;top:567px;width:16px;height:18px;background:#ece9d8;"></div>
<div class="pk" style="left:268px;top:568px;width:731px;height:17px;"></div>
<div style="left:267px;top:585px;width:733px;height:1px;background:#aca899;"></div>
<span class="t" style="top:570.92px;font-size:12.5px;right:964.60px;transform:scaleX(1.059);transform-origin:right center;font-weight:bold;color:#ff0000;-webkit-text-stroke:0.22px #ff0000;">11</span>
<span class="t" style="top:570.92px;font-size:12.5px;left:319.9px;transform:scaleX(0.982);transform-origin:left center;font-weight:bold;color:#ff0000;-webkit-text-stroke:0.22px #ff0000;">WORLEY/CHRISTINEMARGARET MR</span>
<div style="left:634px;top:568px;width:24.5px;height:17px;overflow:hidden;"><span class="t" style="top:2.92px;font-size:12.5px;left:2.5px;transform:scaleX(1.020);transform-origin:left center;font-weight:bold;color:#ff0000;-webkit-text-stroke:0.22px #ff0000;">STN</span></div>
<span class="t" style="top:570.92px;font-size:12.5px;right:461.50px;font-weight:bold;color:#ff0000;-webkit-text-stroke:0.22px #ff0000;">1</span>
<span class="t" style="top:570.92px;font-size:12.5px;right:302.50px;font-weight:bold;color:#ff0000;-webkit-text-stroke:0.22px #ff0000;">4</span>
<div style="left:240px;top:586px;width:10px;height:17px;background:#ece9d8;"></div>
<div style="left:240px;top:603px;width:11px;height:1px;background:#000;"></div>
<div style="left:251px;top:585px;width:16px;height:18px;background:#ece9d8;"></div>
<div class="pk" style="left:268px;top:586px;width:731px;height:17px;"></div>
<div style="left:267px;top:603px;width:733px;height:1px;background:#aca899;"></div>
<span class="t" style="top:588.92px;font-size:12.5px;right:964.60px;font-weight:bold;color:#ff0000;-webkit-text-stroke:0.22px #ff0000;">12</span>
<span class="t" style="top:588.92px;font-size:12.5px;left:319.9px;transform:scaleX(0.967);transform-origin:left center;font-weight:bold;color:#ff0000;-webkit-text-stroke:0.22px #ff0000;">WORLEYSLOGGETT/DANIELLELAUR</span>
<div style="left:634px;top:586px;width:24.5px;height:17px;overflow:hidden;"><span class="t" style="top:2.92px;font-size:12.5px;left:2.5px;transform:scaleX(1.020);transform-origin:left center;font-weight:bold;color:#ff0000;-webkit-text-stroke:0.22px #ff0000;">STN</span></div>
<span class="t" style="top:588.92px;font-size:12.5px;right:565.50px;font-weight:bold;color:#ff0000;-webkit-text-stroke:0.22px #ff0000;">0</span>
<span class="t" style="top:588.92px;font-size:12.5px;right:461.50px;font-weight:bold;color:#ff0000;-webkit-text-stroke:0.22px #ff0000;">1</span>
<span class="t" style="top:588.92px;font-size:12.5px;right:302.50px;font-weight:bold;color:#ff0000;-webkit-text-stroke:0.22px #ff0000;">4</span>
<div style="left:240px;top:604px;width:10px;height:17px;background:#ece9d8;"></div>
<div style="left:240px;top:621px;width:11px;height:1px;background:#000;"></div>
<div style="left:251px;top:603px;width:16px;height:18px;background:#ece9d8;"></div>
<div class="pk" style="left:268px;top:604px;width:731px;height:17px;"></div>
<div style="left:267px;top:621px;width:733px;height:1px;background:#aca899;"></div>
<span class="t" style="top:606.92px;font-size:12.5px;right:964.60px;font-weight:bold;color:#ff0000;-webkit-text-stroke:0.22px #ff0000;">13</span>
<span class="t" style="top:606.92px;font-size:12.5px;left:319.9px;font-weight:bold;color:#ff0000;-webkit-text-stroke:0.22px #ff0000;">WOLTER/IAN MR</span>
<div style="left:634px;top:604px;width:24.5px;height:17px;overflow:hidden;"><span class="t" style="top:2.92px;font-size:12.5px;left:2.5px;transform:scaleX(1.020);transform-origin:left center;font-weight:bold;color:#ff0000;-webkit-text-stroke:0.22px #ff0000;">STN</span></div>
<span class="t" style="top:606.92px;font-size:12.5px;right:565.50px;font-weight:bold;color:#ff0000;-webkit-text-stroke:0.22px #ff0000;">1</span>
<span class="t" style="top:606.92px;font-size:12.5px;right:512.50px;transform:scaleX(0.986);transform-origin:right center;font-weight:bold;color:#ff0000;-webkit-text-stroke:0.22px #ff0000;">14,0</span>
<span class="t" style="top:606.92px;font-size:12.5px;right:461.50px;font-weight:bold;color:#ff0000;-webkit-text-stroke:0.22px #ff0000;">1</span>
<span class="t" style="top:606.92px;font-size:12.5px;right:302.50px;font-weight:bold;color:#ff0000;-webkit-text-stroke:0.22px #ff0000;">4</span>
<div style="left:240px;top:622px;width:10px;height:17px;background:#ece9d8;"></div>
<div style="left:240px;top:639px;width:11px;height:1px;background:#000;"></div>
<div style="left:251px;top:621px;width:16px;height:18px;background:#ece9d8;"></div>
<div class="pk" style="left:268px;top:622px;width:731px;height:17px;"></div>
<div style="left:267px;top:639px;width:733px;height:1px;background:#aca899;"></div>
<span class="t" style="top:624.92px;font-size:12.5px;right:964.60px;font-weight:bold;color:#ff0000;-webkit-text-stroke:0.22px #ff0000;">14</span>
<span class="t" style="top:624.92px;font-size:12.5px;left:319.9px;transform:scaleX(0.963);transform-origin:left center;font-weight:bold;color:#ff0000;-webkit-text-stroke:0.22px #ff0000;">MULLEY/CLARE MS</span>
<div style="left:634px;top:622px;width:24.5px;height:17px;overflow:hidden;"><span class="t" style="top:2.92px;font-size:12.5px;left:2.5px;transform:scaleX(1.020);transform-origin:left center;font-weight:bold;color:#ff0000;-webkit-text-stroke:0.22px #ff0000;">STN</span></div>
<span class="t" style="top:624.92px;font-size:12.5px;right:565.50px;font-weight:bold;color:#ff0000;-webkit-text-stroke:0.22px #ff0000;">1</span>
<span class="t" style="top:624.92px;font-size:12.5px;right:512.50px;transform:scaleX(0.986);transform-origin:right center;font-weight:bold;color:#ff0000;-webkit-text-stroke:0.22px #ff0000;">16,0</span>
<span class="t" style="top:624.92px;font-size:12.5px;right:461.50px;font-weight:bold;color:#ff0000;-webkit-text-stroke:0.22px #ff0000;">1</span>
<span class="t" style="top:624.92px;font-size:12.5px;right:302.50px;font-weight:bold;color:#ff0000;-webkit-text-stroke:0.22px #ff0000;">4</span>
<div style="left:240px;top:640px;width:10px;height:17px;background:#ece9d8;"></div>
<div style="left:240px;top:657px;width:11px;height:1px;background:#000;"></div>
<div style="left:251px;top:639px;width:16px;height:18px;background:#ece9d8;"></div>
<div class="pk" style="left:268px;top:640px;width:731px;height:17px;"></div>
<div style="left:267px;top:657px;width:733px;height:1px;background:#aca899;"></div>
<span class="t" style="top:642.92px;font-size:12.5px;right:964.60px;font-weight:bold;color:#ff0000;-webkit-text-stroke:0.22px #ff0000;">15</span>
<span class="t" style="top:642.92px;font-size:12.5px;left:319.9px;transform:scaleX(0.972);transform-origin:left center;font-weight:bold;color:#ff0000;-webkit-text-stroke:0.22px #ff0000;">FARKAS/PETRA MS</span>
<div style="left:634px;top:640px;width:24.5px;height:17px;overflow:hidden;"><span class="t" style="top:2.92px;font-size:12.5px;left:2.5px;transform:scaleX(1.020);transform-origin:left center;font-weight:bold;color:#ff0000;-webkit-text-stroke:0.22px #ff0000;">STN</span></div>
<span class="t" style="top:642.92px;font-size:12.5px;right:461.50px;font-weight:bold;color:#ff0000;-webkit-text-stroke:0.22px #ff0000;">1</span>
<span class="t" style="top:642.92px;font-size:12.5px;right:302.50px;font-weight:bold;color:#ff0000;-webkit-text-stroke:0.22px #ff0000;">4</span>
<div style="left:240px;top:658px;width:10px;height:17px;background:#ece9d8;"></div>
<div style="left:240px;top:675px;width:11px;height:1px;background:#000;"></div>
<div style="left:251px;top:657px;width:16px;height:18px;background:#ece9d8;"></div>
<div class="pk" style="left:268px;top:658px;width:731px;height:17px;"></div>
<div style="left:267px;top:675px;width:733px;height:1px;background:#aca899;"></div>
<span class="t" style="top:660.92px;font-size:12.5px;right:964.60px;font-weight:bold;color:#ff0000;-webkit-text-stroke:0.22px #ff0000;">16</span>
<span class="t" style="top:660.92px;font-size:12.5px;left:319.9px;transform:scaleX(0.983);transform-origin:left center;font-weight:bold;color:#ff0000;-webkit-text-stroke:0.22px #ff0000;">WOLTER/FLORENCE MISS</span>
<div style="left:634px;top:658px;width:24.5px;height:17px;overflow:hidden;"><span class="t" style="top:2.92px;font-size:12.5px;left:2.5px;transform:scaleX(1.020);transform-origin:left center;font-weight:bold;color:#ff0000;-webkit-text-stroke:0.22px #ff0000;">STN</span></div>
<span class="t" style="top:660.92px;font-size:12.5px;right:565.50px;font-weight:bold;color:#ff0000;-webkit-text-stroke:0.22px #ff0000;">1</span>
<span class="t" style="top:660.92px;font-size:12.5px;right:512.50px;transform:scaleX(0.978);transform-origin:right center;font-weight:bold;color:#ff0000;-webkit-text-stroke:0.22px #ff0000;">8,0</span>
<span class="t" style="top:660.92px;font-size:12.5px;right:390.50px;font-weight:bold;color:#ff0000;-webkit-text-stroke:0.22px #ff0000;">1</span>
<span class="t" style="top:660.92px;font-size:12.5px;right:302.50px;font-weight:bold;color:#ff0000;-webkit-text-stroke:0.22px #ff0000;">4</span>
<div style="left:240px;top:676px;width:10px;height:17px;background:#ece9d8;"></div>
<div style="left:240px;top:693px;width:11px;height:1px;background:#000;"></div>
<div style="left:251px;top:675px;width:16px;height:18px;background:#ece9d8;"></div>
<div class="pk" style="left:268px;top:676px;width:731px;height:17px;"></div>
<div style="left:267px;top:693px;width:733px;height:1px;background:#aca899;"></div>
<span class="t" style="top:678.92px;font-size:12.5px;right:964.60px;font-weight:bold;color:#ff0000;-webkit-text-stroke:0.22px #ff0000;">17</span>
<span class="t" style="top:678.92px;font-size:12.5px;left:319.9px;font-weight:bold;color:#ff0000;-webkit-text-stroke:0.22px #ff0000;">WOLTER/HESTER MISS</span>
<div style="left:634px;top:676px;width:24.5px;height:17px;overflow:hidden;"><span class="t" style="top:2.92px;font-size:12.5px;left:2.5px;transform:scaleX(1.020);transform-origin:left center;font-weight:bold;color:#ff0000;-webkit-text-stroke:0.22px #ff0000;">STN</span></div>
<span class="t" style="top:678.92px;font-size:12.5px;right:390.50px;font-weight:bold;color:#ff0000;-webkit-text-stroke:0.22px #ff0000;">1</span>
<span class="t" style="top:678.92px;font-size:12.5px;right:302.50px;font-weight:bold;color:#ff0000;-webkit-text-stroke:0.22px #ff0000;">4</span>
<div style="left:240px;top:694px;width:10px;height:17px;background:#ece9d8;"></div>
<div style="left:240px;top:711px;width:11px;height:1px;background:#000;"></div>
<div style="left:251px;top:693px;width:16px;height:18px;background:#ece9d8;"></div>
<div class="pk" style="left:268px;top:694px;width:731px;height:17px;"></div>
<div style="left:267px;top:711px;width:733px;height:1px;background:#aca899;"></div>
<span class="t" style="top:696.92px;font-size:12.5px;right:964.60px;font-weight:bold;color:#ff0000;-webkit-text-stroke:0.22px #ff0000;">18</span>
<span class="t" style="top:696.92px;font-size:12.5px;left:319.9px;transform:scaleX(0.987);transform-origin:left center;font-weight:bold;color:#ff0000;-webkit-text-stroke:0.22px #ff0000;">PEPEL/IULIA MS</span>
<div style="left:634px;top:694px;width:24.5px;height:17px;overflow:hidden;"><span class="t" style="top:2.92px;font-size:12.5px;left:2.5px;transform:scaleX(1.020);transform-origin:left center;font-weight:bold;color:#ff0000;-webkit-text-stroke:0.22px #ff0000;">STN</span></div>
<span class="t" style="top:696.92px;font-size:12.5px;right:461.50px;font-weight:bold;color:#ff0000;-webkit-text-stroke:0.22px #ff0000;">1</span>
<span class="t" style="top:696.92px;font-size:12.5px;right:302.50px;font-weight:bold;color:#ff0000;-webkit-text-stroke:0.22px #ff0000;">4</span>
<div style="left:240px;top:712px;width:10px;height:17px;background:#ece9d8;"></div>
<div style="left:240px;top:729px;width:11px;height:1px;background:#000;"></div>
<div style="left:251px;top:711px;width:16px;height:18px;background:#ece9d8;"></div>
<div class="pk" style="left:268px;top:712px;width:731px;height:17px;"></div>
<div style="left:267px;top:729px;width:733px;height:1px;background:#aca899;"></div>
<span class="t" style="top:714.92px;font-size:12.5px;right:964.60px;font-weight:bold;color:#ff0000;-webkit-text-stroke:0.22px #ff0000;">19</span>
<span class="t" style="top:714.92px;font-size:12.5px;left:319.9px;transform:scaleX(0.978);transform-origin:left center;font-weight:bold;color:#ff0000;-webkit-text-stroke:0.22px #ff0000;">ANNFIELD/SUSAN MRS</span>
<div style="left:634px;top:712px;width:24.5px;height:17px;overflow:hidden;"><span class="t" style="top:2.92px;font-size:12.5px;left:2.5px;transform:scaleX(1.020);transform-origin:left center;font-weight:bold;color:#ff0000;-webkit-text-stroke:0.22px #ff0000;">STN</span></div>
<span class="t" style="top:714.92px;font-size:12.5px;right:565.50px;font-weight:bold;color:#ff0000;-webkit-text-stroke:0.22px #ff0000;">1</span>
<span class="t" style="top:714.92px;font-size:12.5px;right:512.50px;transform:scaleX(0.986);transform-origin:right center;font-weight:bold;color:#ff0000;-webkit-text-stroke:0.22px #ff0000;">12,0</span>
<span class="t" style="top:714.92px;font-size:12.5px;right:461.50px;font-weight:bold;color:#ff0000;-webkit-text-stroke:0.22px #ff0000;">1</span>
<span class="t" style="top:714.92px;font-size:12.5px;right:302.50px;font-weight:bold;color:#ff0000;-webkit-text-stroke:0.22px #ff0000;">4</span>
<div style="left:240px;top:730px;width:10px;height:17px;background:#ece9d8;"></div>
<div style="left:240px;top:747px;width:11px;height:1px;background:#000;"></div>
<div style="left:251px;top:729px;width:16px;height:18px;background:#ece9d8;"></div>
<div class="pk" style="left:268px;top:730px;width:731px;height:17px;"></div>
<div style="left:267px;top:747px;width:733px;height:1px;background:#aca899;"></div>
<span class="t" style="top:732.92px;font-size:12.5px;right:964.60px;font-weight:bold;color:#ff0000;-webkit-text-stroke:0.22px #ff0000;">20</span>
<span class="t" style="top:732.92px;font-size:12.5px;left:319.9px;transform:scaleX(0.965);transform-origin:left center;font-weight:bold;color:#ff0000;-webkit-text-stroke:0.22px #ff0000;">PEAFORD/JANE MRS</span>
<div style="left:634px;top:730px;width:24.5px;height:17px;overflow:hidden;"><span class="t" style="top:2.92px;font-size:12.5px;left:2.5px;transform:scaleX(1.020);transform-origin:left center;font-weight:bold;color:#ff0000;-webkit-text-stroke:0.22px #ff0000;">STN</span></div>
<span class="t" style="top:732.92px;font-size:12.5px;right:461.50px;font-weight:bold;color:#ff0000;-webkit-text-stroke:0.22px #ff0000;">1</span>
<span class="t" style="top:732.92px;font-size:12.5px;right:302.50px;font-weight:bold;color:#ff0000;-webkit-text-stroke:0.22px #ff0000;">4</span>
<div style="left:240px;top:748px;width:10px;height:17px;background:#ece9d8;"></div>
<div style="left:240px;top:765px;width:11px;height:1px;background:#000;"></div>
<div style="left:251px;top:747px;width:16px;height:18px;background:#ece9d8;"></div>
<div class="pk" style="left:268px;top:748px;width:731px;height:17px;"></div>
<div style="left:267px;top:765px;width:733px;height:1px;background:#aca899;"></div>
<span class="t" style="top:750.92px;font-size:12.5px;right:964.60px;font-weight:bold;color:#ff0000;-webkit-text-stroke:0.22px #ff0000;">21</span>
<span class="t" style="top:750.92px;font-size:12.5px;left:319.9px;font-weight:bold;color:#ff0000;-webkit-text-stroke:0.22px #ff0000;">EVANS/CATHERINE MS</span>
<div style="left:634px;top:748px;width:24.5px;height:17px;overflow:hidden;"><span class="t" style="top:2.92px;font-size:12.5px;left:2.5px;transform:scaleX(1.020);transform-origin:left center;font-weight:bold;color:#ff0000;-webkit-text-stroke:0.22px #ff0000;">STN</span></div>
<span class="t" style="top:750.92px;font-size:12.5px;right:565.50px;font-weight:bold;color:#ff0000;-webkit-text-stroke:0.22px #ff0000;">1</span>
<span class="t" style="top:750.92px;font-size:12.5px;right:512.50px;transform:scaleX(0.986);transform-origin:right center;font-weight:bold;color:#ff0000;-webkit-text-stroke:0.22px #ff0000;">13,0</span>
<span class="t" style="top:750.92px;font-size:12.5px;right:461.50px;font-weight:bold;color:#ff0000;-webkit-text-stroke:0.22px #ff0000;">1</span>
<span class="t" style="top:750.92px;font-size:12.5px;right:302.50px;font-weight:bold;color:#ff0000;-webkit-text-stroke:0.22px #ff0000;">4</span>
<div style="left:240px;top:766px;width:10px;height:17px;background:#ece9d8;"></div>
<div style="left:240px;top:783px;width:11px;height:1px;background:#000;"></div>
<div style="left:251px;top:765px;width:16px;height:18px;background:#ece9d8;"></div>
<div class="pk" style="left:268px;top:766px;width:731px;height:17px;"></div>
<div style="left:267px;top:783px;width:733px;height:1px;background:#aca899;"></div>
<span class="t" style="top:768.92px;font-size:12.5px;right:964.60px;font-weight:bold;color:#ff0000;-webkit-text-stroke:0.22px #ff0000;">22</span>
<span class="t" style="top:768.92px;font-size:12.5px;left:319.9px;transform:scaleX(0.990);transform-origin:left center;font-weight:bold;color:#ff0000;-webkit-text-stroke:0.22px #ff0000;">THAXTER/BRIAN MR</span>
<div style="left:634px;top:766px;width:24.5px;height:17px;overflow:hidden;"><span class="t" style="top:2.92px;font-size:12.5px;left:2.5px;transform:scaleX(1.020);transform-origin:left center;font-weight:bold;color:#ff0000;-webkit-text-stroke:0.22px #ff0000;">STN</span></div>
<span class="t" style="top:768.92px;font-size:12.5px;right:461.50px;font-weight:bold;color:#ff0000;-webkit-text-stroke:0.22px #ff0000;">1</span>
<span class="t" style="top:768.92px;font-size:12.5px;right:302.50px;font-weight:bold;color:#ff0000;-webkit-text-stroke:0.22px #ff0000;">4</span>
<div class="pk" style="left:268px;top:387px;width:731px;height:1px;"></div>
<div style="left:317px;top:387px;width:1px;height:397px;background:#aca899;"></div>
<div style="left:541px;top:387px;width:1px;height:397px;background:#aca899;"></div>
<div style="left:569px;top:387px;width:1px;height:397px;background:#aca899;"></div>
<div style="left:599px;top:387px;width:1px;height:397px;background:#aca899;"></div>
<div style="left:633px;top:387px;width:1px;height:397px;background:#aca899;"></div>
<div style="left:660px;top:387px;width:1px;height:397px;background:#aca899;"></div>
<div style="left:680px;top:387px;width:1px;height:397px;background:#aca899;"></div>
<div style="left:717px;top:387px;width:1px;height:397px;background:#aca899;"></div>
<div style="left:769px;top:387px;width:1px;height:397px;background:#aca899;"></div>
<div style="left:789px;top:387px;width:1px;height:397px;background:#aca899;"></div>
<div style="left:821px;top:387px;width:1px;height:397px;background:#aca899;"></div>
<div style="left:859px;top:387px;width:1px;height:397px;background:#aca899;"></div>
<div style="left:892px;top:387px;width:1px;height:397px;background:#aca899;"></div>
<div style="left:931px;top:387px;width:1px;height:397px;background:#aca899;"></div>
<div style="left:979px;top:387px;width:1px;height:397px;background:#aca899;"></div>
<div style="left:999px;top:387px;width:1px;height:397px;background:#aca899;"></div>
<div style="left:267px;top:387px;width:1px;height:397px;background:#aca899;"></div>
<div style="left:251px;top:784px;width:16px;height:2px;background:#ece9d8;"></div>
<div class="pk" style="left:268px;top:784px;width:731px;height:1px;"></div>
<div style="left:239px;top:785px;width:761px;height:1px;background:#aca899;"></div>
<div style="left:240px;top:786px;width:760px;height:23px;background:#ece9d8;"></div>
<div style="left:999px;top:786px;width:1px;height:23px;background:#aca899;"></div>
<div style="left:239px;top:809px;width:761px;height:3px;background:#aca899;"></div>
<div style="left:1000px;top:809px;width:41px;height:3px;background:#c4c1b2;"></div>
<div class="fbox" style="left:253px;top:788px;width:63px;height:19px;"></div><span class="t" style="top:792.27px;font-size:11.5px;right:966.50px;">174</span>
<div class="fbox" style="left:683px;top:788px;width:33px;height:19px;"></div><span class="t" style="top:792.27px;font-size:11.5px;right:566.50px;">49</span>
<div class="fbox" style="left:720px;top:788px;width:48px;height:19px;"></div><span class="t" style="top:792.27px;font-size:11.5px;right:514.50px;">642</span>
<div class="fbox" style="left:792px;top:788px;width:28px;height:19px;"></div><span class="t" style="top:792.27px;font-size:11.5px;right:462.50px;">151</span>
<div class="fbox" style="left:824px;top:788px;width:34px;height:19px;"></div><span class="t" style="top:792.27px;font-size:11.5px;right:424.50px;">0</span>
<div class="fbox" style="left:862px;top:788px;width:29px;height:19px;"></div><span class="t" style="top:792.27px;font-size:11.5px;right:391.50px;">23</span>
<div class="fbox" style="left:895px;top:788px;width:35px;height:19px;"></div><span class="t" style="top:792.27px;font-size:11.5px;right:352.50px;">2</span>
<div style="left:1024px;top:315px;width:17px;height:495px;background:#f4f3ee;background-image:repeating-conic-gradient(#e4e2d6 0 25%,#fdfdfb 0 50%);background-size:2px 2px;"></div>
<div style="left:1024px;top:316px;width:17px;height:17px;background:#ece9d8;border:1px solid #000;"></div>
<svg style="left:1028px;top:321px" width="9" height="6" viewBox="0 0 9 6"><path d="M0 5.500L4.500 0.500L9 5.500z" fill="#000"/></svg>
<div style="left:1024px;top:333px;width:17px;height:60px;background:#ece9d8;border:1px solid #000;"></div>
<div style="left:1024px;top:793px;width:17px;height:17px;background:#ece9d8;border:1px solid #000;"></div>
<svg style="left:1028px;top:799px" width="9" height="6" viewBox="0 0 9 6"><path d="M0 0.500L4.500 5L9 0.500z" fill="#000"/></svg>
</div>
</body></html>
